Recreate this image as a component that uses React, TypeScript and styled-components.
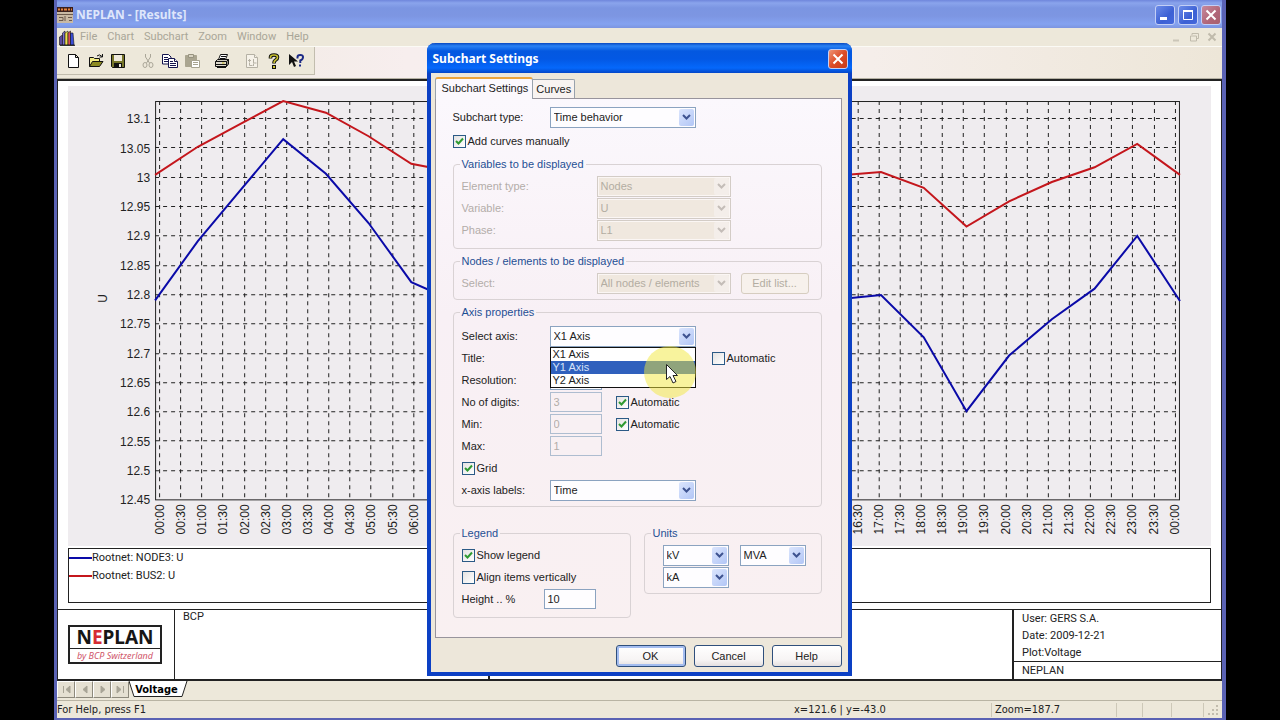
import React from "react";
import styled, { createGlobalStyle, css } from "styled-components";

const Global = createGlobalStyle`
  *, *::before, *::after { box-sizing: border-box; }
  body { margin: 0; background: #000; }
  button, input, select { font: inherit; color: inherit; margin: 0; }
`;

const tahoma = `"DejaVu Sans Condensed", "DejaVu Sans", sans-serif`;
const arial = `"Liberation Sans", Arial, sans-serif`;
const ui = `Roboto, "Liberation Sans", Arial, sans-serif`;
const caption = `"Noto Sans", "Open Sans", sans-serif`;

/* ---------- Application window ---------- */

const Desktop = styled.div`
  min-height: 100vh;
  padding: 0 54px;
  display: flex;
  background: #000;
  font: 11px/14px ${ui};
  color: #222;
`;

const Window = styled.div`
  position: relative;
  flex: 1;
  min-width: 0;
  display: flex;
  flex-direction: column;
  background: #ede8da;
  border: solid #5a62b4;
  border-width: 0 4px 3px 3px;
`;

const TitleBar = styled.header`
  height: 28px;
  display: flex;
  align-items: center;
  gap: 3px;
  padding: 2px 1px 0 0;
  background: linear-gradient(#6f86dc 0, #8aa4ec 3px, #7b95e2 8px, #7d96e2 16px, #84a2f0 24px, #7c94e0 28px);
`;

const WindowTitle = styled.h1`
  flex: 1;
  margin: 0;
  font: bold 12px/16px ${caption};
  color: #dfe6fb;
`;

const CaptionButton = styled.button<{ $tone?: "blue" | "rose" | "red" }>`
  width: 20px;
  height: 20px;
  padding: 0;
  display: grid;
  place-items: center;
  border: 1px solid #c3cff6;
  border-radius: 3px;
  background: ${(p) =>
    p.$tone === "red"
      ? "linear-gradient(135deg, #ee9475, #dd4c28 50%, #c83c18)"
      : p.$tone === "rose"
      ? "linear-gradient(135deg, #c8899c, #b06678 60%, #a8606f)"
      : "linear-gradient(135deg, #6c8ce8, #3c60d4 60%, #4468dc)"};
`;

const MenuBar = styled.nav`
  height: 19px;
  display: flex;
  align-items: center;
  gap: 4px;
  padding: 0 4px 0 2px;
  border-bottom: 1px solid #fbfaf5;
`;

const MenuItems = styled.div`
  display: flex;
  gap: 10px;
`;

const MenuItem = styled.button`
  padding: 0;
  border: 0;
  background: none;
  color: #a9a698;
`;

const MdiButtons = styled.div`
  margin-left: auto;
  display: flex;
  gap: 6px;
`;

const MdiButton = styled.button`
  width: 12px;
  height: 12px;
  padding: 0;
  border: 0;
  background: none;
`;

const ToolBand = styled.div`
  height: 32px;
  padding-bottom: 3px;
  background: linear-gradient(90deg, #ede8da 0, #f7eeee 30%, #f5eeea 70%, #ede6d8);
  border-bottom: 1px solid #b5b1a3;
  display: flex;
`;

const Toolbar = styled.div`
  display: flex;
  align-items: center;
  padding: 0 7px 0 6px;
  background: #ede8da;
  border: solid #c2bdae;
  border-width: 0 1px 1px 0;
`;

const ToolButton = styled.button`
  width: 22px;
  height: 22px;
  padding: 3px;
  border: 0;
  background: none;
  svg { display: block; }
`;

const ToolGap = styled.span`
  width: 8px;
`;

/* ---------- Results document ---------- */

const Document = styled.main`
  flex: 1;
  display: flex;
  flex-direction: column;
  background: #fff;
  border: solid #222;
  border-width: 2px 1px 2px 1px;
`;

const ChartPanel = styled.section`
  margin: 5px 10px 2px;
  background: #efecef;
  svg { display: block; width: 100%; height: auto; }
`;

const ChartLegend = styled.ul`
  list-style: none;
  height: 55px;
  margin: 0 10px 6px;
  padding: 0;
  border: 1px solid #222;
`;

const LegendEntry = styled.li<{ $color: string }>`
  height: 18px;
  display: flex;
  align-items: center;
  &::before {
    content: "";
    width: 23px;
    height: 2px;
    background: ${(p) => p.$color};
  }
`;

const TitleBlock = styled.footer`
  flex: 1;
  min-height: 70px;
  display: grid;
  grid-template-columns: 116px 3fr 5fr 209px;
  border-top: 1px solid #222;
`;

const BlockCell = styled.div<{ $rule?: number }>`
  padding: 0 8px;
  border-left: ${(p) => p.$rule ?? 0}px solid #222;
`;

const LogoCell = styled(BlockCell)`
  padding: 0 12px 0 10px;
  display: flex;
  align-items: center;
`;

const Logo = styled.div`
  flex: 1;
  border: 2px solid #222;
  text-align: center;
  color: #161616;
`;

const LogoName = styled.div`
  font: bold 19px/21px ${caption};
  border-bottom: 1px solid #222;
  em { font-style: normal; color: #d52c33; }
`;

const LogoBy = styled.div`
  font: italic 9px/13px ${caption};
  color: #d0566a;
`;

const InfoCell = styled(BlockCell)`
  padding: 0;
  display: flex;
  flex-direction: column;
  justify-content: space-between;
`;

const InfoLines = styled.div`
  padding: 0 8px;
  line-height: 17px;
`;

const InfoFoot = styled.div`
  padding: 0 8px;
  line-height: 17px;
  border-top: 1px solid #222;
`;

const SheetBar = styled.div`
  height: 19px;
  display: flex;
  align-items: flex-start;
`;

const SheetNav = styled.button`
  width: 18px;
  height: 17px;
  padding: 0;
  display: grid;
  place-items: center;
  border: 1px solid #8d897c;
  border-top-color: #fff;
  border-left-color: #fff;
  background: #e5e0d2;
`;

const SheetTab = styled.button`
  position: relative;
  width: 59px;
  height: 17px;
  padding: 0 4px 0 0;
  border: 0;
  background: none;
  font: bold 11px/15px ${tahoma};
  color: #000;
  svg { position: absolute; inset: 0; }
  span { position: relative; }
`;

const StatusBar = styled.div`
  height: 18px;
  display: flex;
  align-items: center;
  border-top: 1px solid #b9b4a4;
  font: 11px/14px ${tahoma};
`;

const StatusCell = styled.span<{ $width?: number; $rule?: boolean }>`
  ${(p) => (p.$width ? css`width: ${p.$width}px;` : css`flex: 1;`)}
  height: 14px;
  line-height: 14px;
  white-space: nowrap;
  ${(p) => p.$rule && css`
    padding-left: 3px;
    border-left: 1px solid #cdc8b8;
  `}
`;

/* ---------- Dialog ---------- */

const Dialog = styled.div`
  position: absolute;
  top: 43px;
  left: calc(50% - 213px);
  width: 425px;
  display: flex;
  flex-direction: column;
  background: #ede7da;
  border: solid #0c40c4;
  border-width: 0 4px 4px 4px;
  border-radius: 8px 8px 0 0;
  font: 11px/14px ${arial};
`;

const DialogTitleBar = styled.div`
  height: 30px;
  margin: 0 -4px;
  padding: 1px 4px 0 6px;
  display: flex;
  align-items: center;
  justify-content: space-between;
  border-radius: 8px 8px 0 0;
  background: linear-gradient(#0848c0 0, #2a82f4 3px, #0458e0 8px, #0358e4 16px, #0568fb 25px, #0346c8 30px);
`;

const DialogTitle = styled.h2`
  margin: 0;
  font: bold 12px/16px ${caption};
  color: #fff;
`;

const DialogBody = styled.form`
  padding: 4px 6px 5px 4px;
`;

const Tabs = styled.div`
  height: 21px;
  display: flex;
  align-items: flex-end;
`;

const Tab = styled.button<{ $active?: boolean }>`
  height: 19px;
  padding: 0 3px;
  border: 1px solid #98a2ac;
  border-bottom: 0;
  border-left-width: 0;
  border-radius: 0 2px 0 0;
  background: #f8f3f1;
  ${(p) => p.$active && css`
    position: relative;
    height: 22px;
    margin-bottom: -1px;
    padding: 0 4px 3px 6px;
    border-left-width: 1px;
    border-top: 2px solid #eca53c;
    border-radius: 3px 3px 0 0;
    background: #fbf8fd;
  `}
`;

const TabPanel = styled.div`
  padding: 7px 19px 19px 17px;
  display: flex;
  flex-direction: column;
  gap: 5px;
  border: 1px solid #98949c;
  background: linear-gradient(#fbf8fd, #f8f0f5 40%, #f9f0f1);
`;

const Rows = styled.div`
  display: flex;
  flex-direction: column;
  gap: 2px;
`;

const Group = styled.fieldset<{ $head?: number; $foot?: number }>`
  min-width: 0;
  margin: 0;
  padding: ${(p) => p.$head ?? 4}px 8px ${(p) => p.$foot ?? 5}px;
  border: 1px solid #d9d2d4;
  border-radius: 4px;
`;

const GroupTitle = styled.legend`
  margin-left: -2px;
  padding: 0 2px;
  color: #1f4f94;
`;

const BottomGroups = styled.div`
  display: grid;
  grid-template-columns: 1fr 1fr;
  align-items: start;
  gap: 13px;
  margin-top: 14px;
`;

const Row = styled.div<{ $disabled?: boolean; $indent?: number }>`
  height: 22px;
  display: flex;
  align-items: center;
  padding-left: ${(p) => p.$indent ?? 0}px;
  color: ${(p) => (p.$disabled ? "#b3ada9" : "#222")};
`;

const RowLabel = styled.label<{ $width: number }>`
  width: ${(p) => p.$width}px;
  flex: none;
`;

const SelectWrap = styled.span<{ $width: number; $after?: number }>`
  position: relative;
  display: block;
  flex: none;
  width: ${(p) => p.$width}px;
  height: 21px;
  margin-right: ${(p) => p.$after ?? 0}px;
`;

const SelectBox = styled.select`
  appearance: none;
  display: block;
  width: 100%;
  height: 100%;
  padding: 0 20px 0 3px;
  border: 1px solid #8ba3c0;
  border-radius: 0;
  background: #fefdff;
  opacity: 1;
  &:disabled {
    color: #b3ada2;
    border-color: #d3ccc6;
    background: #f0e8df;
    box-shadow: inset 0 0 0 1px #fbf6f4;
  }
`;

const SelectArrow = styled.span<{ $disabled?: boolean }>`
  position: absolute;
  top: 2px;
  right: 2px;
  width: 15px;
  height: 17px;
  display: grid;
  place-items: center;
  border-radius: 2px;
  pointer-events: none;
  color: ${(p) => (p.$disabled ? "#c4bdb8" : "#3e5390")};
  background: ${(p) => (p.$disabled ? "#f4eeea" : "linear-gradient(135deg, #dbe5fd, #b2c6f6)")};
`;

const TextBox = styled.input`
  width: 52px;
  height: 20px;
  padding: 0 3px;
  border: 1px solid #8ba3c0;
  background: #fefdff;
  &:disabled {
    color: #b3ada9;
    border-color: #aebdd0;
    background: #f8f0f3;
  }
`;

const CheckLabel = styled.label<{ $left?: number }>`
  display: inline-flex;
  align-items: center;
  gap: 2px;
  margin-left: ${(p) => p.$left ?? 0}px;
`;

const CheckMark = styled.span`
  position: relative;
  display: block;
  width: 13px;
  height: 13px;
  input {
    appearance: none;
    display: block;
    width: 13px;
    height: 13px;
    border: 1px solid #2b5a86;
    background: linear-gradient(135deg, #e4e2e2, #fff);
  }
  svg { position: absolute; inset: 0; pointer-events: none; }
`;

const PushButton = styled.button<{ $default?: boolean }>`
  width: 70px;
  height: 22px;
  padding: 0;
  border: 1px solid #2f4f7c;
  border-radius: 3px;
  background: linear-gradient(#fff, #f7f4f4 70%, #e4dfe0);
  ${(p) => p.$default && css`box-shadow: inset 0 0 0 2px #a4bdf0;`}
  &:disabled {
    width: 68px;
    height: 21px;
    color: #b3ada2;
    border-color: #d6cdc0;
    background: #f7f1ec;
  }
`;

const Footer = styled.div`
  display: flex;
  justify-content: flex-end;
  gap: 8px;
  padding-top: 7px;
`;

const DropList = styled.ul`
  position: absolute;
  z-index: 1;
  top: 100%;
  left: 0;
  right: 0;
  margin: 0;
  padding: 0;
  list-style: none;
  border: 1px solid #111;
  background: #fff;
`;

const DropItem = styled.li<{ $selected?: boolean }>`
  padding: 0 2px;
  line-height: 13px;
  ${(p) => p.$selected && css`
    color: #d6e2f8;
    background: #2f60bd;
  `}
`;

const Pointer = styled.svg`
  position: absolute;
  z-index: 2;
  top: 20px;
  left: 94px;
  pointer-events: none;
`;

/* ---------- Chart ---------- */

const node3 = [12.791, 12.892, 12.979, 13.066, 13.007, 12.923, 12.822, 12.79, 12.77, 12.76, 12.75, 12.75, 12.76, 12.77, 12.78, 12.79, 12.793, 12.8, 12.728, 12.602, 12.697, 12.759, 12.811, 12.901, 12.79];
const bus2 = [13.005, 13.053, 13.092, 13.131, 13.111, 13.071, 13.024, 13.01, 13.0, 12.99, 12.99, 12.99, 12.99, 13.0, 13.0, 13.0, 13.004, 13.01, 12.983, 12.917, 12.96, 12.993, 13.018, 13.058, 13.005];

const plot = { left: 87, right: 1111, top: 15, bottom: 414, min: 12.45, max: 13.131 };
const xAt = (hour: number) => plot.left + (hour / 24) * (plot.right - plot.left);
const yAt = (v: number) => plot.bottom - ((v - plot.min) / (plot.max - plot.min)) * (plot.bottom - plot.top);
const pointsOf = (data: number[]) => data.map((v, h) => `${xAt(h).toFixed(1)},${yAt(v).toFixed(1)}`).join(" ");
const yTicks = Array.from({ length: 14 }, (_, i) => Math.round((12.45 + i * 0.05) * 100) / 100);
const xTicks = Array.from({ length: 49 }, (_, i) => ({
  x: Math.round(91 + i * 21.14) + 0.5,
  label: `${String(Math.floor(i / 2) % 24).padStart(2, "0")}:${i % 2 ? "30" : "00"}`,
}));

const AxisText = styled.text`
  font: 12px ${arial};
  fill: #222;
`;

function VoltageChart() {
  return (
    <svg viewBox="0 0 1142 460" role="img" aria-label="Voltage over time">
      <g stroke="#222" strokeDasharray="4 4" fill="none">
        {xTicks.map((t) => <line key={t.x} x1={t.x} x2={t.x} y1={plot.top} y2={plot.bottom} />)}
        {yTicks.slice(1).map((v) => {
          const y = Math.round(yAt(v)) - 0.5;
          return <line key={v} x1={plot.left} x2={plot.right} y1={y} y2={y} />;
        })}
      </g>
      <rect x={87.5} y={15.5} width={1023} height={398} fill="none" stroke="#222" />
      <polyline points={pointsOf(bus2)} fill="none" stroke="#c4161c" strokeWidth="2" />
      <polyline points={pointsOf(node3)} fill="none" stroke="#0a0aa8" strokeWidth="2" />
      {yTicks.map((v) => (
        <AxisText key={v} x={82} y={yAt(v) + 4} textAnchor="end">{v}</AxisText>
      ))}
      {xTicks.map((t) => (
        <AxisText key={t.x} transform={`translate(${t.x + 4} 418) rotate(-90)`} textAnchor="end">{t.label}</AxisText>
      ))}
      <AxisText transform="translate(39 208) rotate(-90)" textAnchor="end">U</AxisText>
    </svg>
  );
}

/* ---------- Icons ---------- */

const CloseGlyph = () => (
  <svg width="12" height="12" viewBox="0 0 12 12"><path d="M1.500 1.500l9 9M10.500 1.500l-9 9" stroke="#fff" strokeWidth="2" /></svg>
);

const AppIcon = () => (
  <svg width="16" height="16" viewBox="0 0 16 16">
    <rect width="16" height="16" fill="#c9b9a4" />
    <rect width="16" height="5" fill="#3a1f1c" />
    <path d="M1 2.500h2m1 0h2m1 0h3m1 0h2m1 0h1" stroke="#e8843c" strokeWidth="2" />
    <path d="M0 7.500h16M2 10.500h4v3h-4M8 9v5M11 10.500h4M12 13.500h3" stroke="#6b594c" fill="none" />
  </svg>
);

const BooksIcon = () => (
  <svg width="17" height="17" viewBox="0 0 17 17">
    <path d="M.5 8l3-2v10h-3z" fill="#5a4a9c" stroke="#111" strokeWidth=".6" />
    <path d="M3.500 4l2.500-2v14h-2.500z" fill="#7b6fd0" stroke="#111" strokeWidth=".6" />
    <path d="M6 4l3-2v14h-3z" fill="#ece04c" stroke="#111" strokeWidth=".6" />
    <path d="M9 4l2.500-2v14h-2.500z" fill="#d6505a" stroke="#111" strokeWidth=".6" />
    <path d="M11.500 4h2.500l1 12h-3.500z" fill="#3a4ed8" stroke="#111" strokeWidth=".6" />
    <path d="M1 16.300h15" stroke="#111" />
  </svg>
);

const toolIcons: Record<string, React.ReactNode> = {
  New: <path d="M2.500 1.500h7l3 3v10h-10zM9.500 1.500v3h3" fill="#fff" stroke="#111" />,
  Open: (
    <>
      <path d="M1.500 13.500v-9h4l1 1h5v3" fill="#f2ec84" stroke="#111" />
      <path d="M1.500 13.500l3-5h10.500l-3.500 5z" fill="#8c8a20" stroke="#111" />
      <path d="M9 3q2.500-2.500 5 .5M14.500 1v3h-3" fill="none" stroke="#111" />
    </>
  ),
  Save: (
    <>
      <path d="M1.500 1.500h13v13h-12l-1-1z" fill="#77762a" stroke="#111" />
      <rect x="4" y="2" width="8" height="6" fill="#efeadd" />
      <rect x="4" y="10" width="8" height="4.500" fill="#111" />
      <rect x="9" y="11" width="2" height="3" fill="#efeadd" />
    </>
  ),
  Cut: (
    <g fill="none" stroke="#aaa698">
      <path d="M5.500 1v3l4 6M10.500 1v3l-4 6" />
      <ellipse cx="5" cy="12" rx="2" ry="2.500" />
      <ellipse cx="11" cy="12" rx="2" ry="2.500" />
    </g>
  ),
  Copy: (
    <g fill="#fff" stroke="#14144e">
      <path d="M.5 1.500h6l2.500 2.500v7h-8.500z" />
      <path d="M2 4.500h4M2 6.500h4M2 8.500h4" />
      <path d="M6.500 5.500h6l3 3v6h-9z" />
      <path d="M12.500 5.500v3h3M8 8.500h3M8 10.500h6M8 12.500h6" />
    </g>
  ),
  Paste: (
    <>
      <path d="M1.500 2.500h11v11h-11z" fill="#aaa590" stroke="#aaa590" />
      <path d="M4.500 1.500h5v3h-5z" fill="#d8d3c2" stroke="#97937f" />
      <path d="M7.500 7.500h8v7h-8z" fill="#fff" stroke="#a7a391" />
      <path d="M9 9.500h5M9 11.500h5" stroke="#a7a391" />
    </>
  ),
  Print: (
    <g stroke="#111">
      <path d="M4.500 6.500l2-5h7l-2 5z" fill="#fff" />
      <path d="M7 3.500h5M6 5.500h5" />
      <path d="M1.500 8.500l2-2h11l-2 2z" fill="#c9c6bb" />
      <path d="M1.500 8.500h11v5h-11z" fill="#ddd9cc" />
      <path d="M12.500 8.500l2-2v4.500l-2 2.500z" fill="#8f8c80" />
      <path d="M2 11.500h10M3 14.500h9" />
      <path d="M8 10h2.500" stroke="#c6b828" />
    </g>
  ),
  Preview: (
    <g fill="#f6f2e9" stroke="#b5b1a4">
      <path d="M2.500 1.500h8l3 3v10h-11z" />
      <path d="M10.500 1.500v3h3M5.500 6v3M4 7.500h3M9.500 6v4h3M5.500 9.500v3h3M9.500 10.500v2.500" />
    </g>
  ),
  Help: (
    <>
      <path d="M4.500 5.500V4.200q0-2.200 3.500-2.200t3.500 2.200q0 1.800-1.800 2.800t-1.700 3.500" fill="none" stroke="#111" strokeWidth="3.600" />
      <path d="M4.500 5V4.200q0-2.200 3.500-2.200t3.500 2.200q0 1.800-1.800 2.800t-1.700 3" fill="none" stroke="#c9c02c" strokeWidth="1.600" />
      <rect x="6" y="12" width="4" height="4" fill="#111" />
      <rect x="7" y="13" width="2" height="2" fill="#c9c02c" />
    </>
  ),
  "Context help": (
    <>
      <path d="M1 1v11l3-3 2 5 2-1-2-4.500h4z" fill="#111" />
      <path d="M9.500 5.500V4q0-2 2.800-2t2.700 2.200-2.700 3.300V10" fill="none" stroke="#1c2a86" strokeWidth="2" />
      <rect x="11" y="11.500" width="2" height="2" fill="#1c2a86" />
    </>
  ),
};

const toolGroups = [["New", "Open", "Save"], ["Cut", "Copy", "Paste"], ["Print"], ["Preview", "Help", "Context help"]];

const sheetArrows: [string, string][] = [
  ["First sheet", "M2.500 2v7M9 2v7l-4-3.500z"],
  ["Previous sheet", "M8 2v7l-4-3.500z"],
  ["Next sheet", "M4 2v7l4-3.500z"],
  ["Last sheet", "M2 2v7l4-3.500zM8.500 2v7"],
];

/* ---------- Form parts ---------- */

interface SelectProps {
  id: string;
  label?: string;
  value: string;
  width: number;
  after?: number;
  disabled?: boolean;
  options?: string[];
  children?: React.ReactNode;
}

function Select({ id, label, value, width, after, disabled, options = [value], children }: SelectProps) {
  return (
    <SelectWrap $width={width} $after={after}>
      <SelectBox id={id} aria-label={label} defaultValue={value} disabled={disabled}>
        {options.map((o) => <option key={o}>{o}</option>)}
      </SelectBox>
      <SelectArrow $disabled={disabled}>
        <svg width="9" height="7" viewBox="0 0 9 7"><path d="M1 1l3.500 3.500L8 1" fill="none" stroke="currentColor" strokeWidth="2" /></svg>
      </SelectArrow>
      {children}
    </SelectWrap>
  );
}

function Check({ label, checked, left }: { label: string; checked?: boolean; left?: number }) {
  return (
    <CheckLabel $left={left}>
      <CheckMark>
        <input type="checkbox" defaultChecked={checked} />
        {checked && (
          <svg width="13" height="13" viewBox="0 0 13 13"><path d="M3 6l2.500 2.500L10 3.500" fill="none" stroke="#2f9a32" strokeWidth="2" /></svg>
        )}
      </CheckMark>
      {label}
    </CheckLabel>
  );
}

function SubchartDialog() {
  return (
    <Dialog role="dialog" aria-labelledby="dialog-title">
      <DialogTitleBar>
        <DialogTitle id="dialog-title">Subchart Settings</DialogTitle>
        <CaptionButton $tone="red" aria-label="Close dialog"><CloseGlyph /></CaptionButton>
      </DialogTitleBar>
      <DialogBody onSubmit={(e) => e.preventDefault()}>
        <Tabs role="tablist">
          <Tab type="button" role="tab" aria-selected $active>Subchart Settings</Tab>
          <Tab type="button" role="tab">Curves</Tab>
        </Tabs>
        <TabPanel role="tabpanel">
          <Rows>
            <Row>
              <RowLabel $width={97} htmlFor="type">Subchart type:</RowLabel>
              <Select id="type" value="Time behavior" width={146} />
            </Row>
            <Row><Check label="Add curves manually" checked /></Row>
          </Rows>

          <Group $foot={7}>
            <GroupTitle>Variables to be displayed</GroupTitle>
            <Row $disabled>
              <RowLabel $width={135} htmlFor="element">Element type:</RowLabel>
              <Select id="element" value="Nodes" width={134} disabled />
            </Row>
            <Row $disabled>
              <RowLabel $width={135} htmlFor="variable">Variable:</RowLabel>
              <Select id="variable" value="U" width={134} disabled />
            </Row>
            <Row $disabled>
              <RowLabel $width={135} htmlFor="phase">Phase:</RowLabel>
              <Select id="phase" value="L1" width={134} disabled />
            </Row>
          </Group>

          <Group>
            <GroupTitle>Nodes / elements to be displayed</GroupTitle>
            <Row $disabled>
              <RowLabel $width={135} htmlFor="nodes">Select:</RowLabel>
              <Select id="nodes" value="All nodes / elements" width={134} after={10} disabled />
              <PushButton type="button" disabled>Edit list...</PushButton>
            </Row>
          </Group>

          <Group $head={6}>
            <GroupTitle>Axis properties</GroupTitle>
            <Row>
              <RowLabel $width={88} htmlFor="axis">Select axis:</RowLabel>
              <Select id="axis" value="X1 Axis" width={146} options={["X1 Axis", "Y1 Axis", "Y2 Axis"]}>
                <DropList role="listbox" aria-label="Select axis">
                  <DropItem role="option">X1 Axis</DropItem>
                  <DropItem role="option" aria-selected $selected>Y1 Axis</DropItem>
                  <DropItem role="option">Y2 Axis</DropItem>
                </DropList>
                <Pointer width="52" height="52" viewBox="0 0 52 52">
                  <circle cx="26" cy="26" r="26" fill="#f2e83c" opacity="0.5" />
                  <path d="M22.500 18.500v15l3.500-3 3 6.500 3-1.500-3-6h4.500z" fill="#fff" stroke="#222" />
                </Pointer>
              </Select>
            </Row>
            <Row>
              <RowLabel $width={88} htmlFor="title">Title:</RowLabel>
              <TextBox id="title" />
              <Check label="Automatic" left={110} />
            </Row>
            <Row>
              <RowLabel $width={88} htmlFor="resolution">Resolution:</RowLabel>
              <TextBox id="resolution" />
            </Row>
            <Row>
              <RowLabel $width={88} htmlFor="digits">No of digits:</RowLabel>
              <TextBox id="digits" defaultValue="3" disabled />
              <Check label="Automatic" checked left={14} />
            </Row>
            <Row>
              <RowLabel $width={88} htmlFor="min">Min:</RowLabel>
              <TextBox id="min" defaultValue="0" disabled />
              <Check label="Automatic" checked left={14} />
            </Row>
            <Row>
              <RowLabel $width={88} htmlFor="max">Max:</RowLabel>
              <TextBox id="max" defaultValue="1" disabled />
            </Row>
            <Row><Check label="Grid" checked /></Row>
            <Row>
              <RowLabel $width={88} htmlFor="xlabels">x-axis labels:</RowLabel>
              <Select id="xlabels" value="Time" width={146} />
            </Row>
          </Group>

          <BottomGroups>
            <Group $foot={7}>
              <GroupTitle>Legend</GroupTitle>
              <Row><Check label="Show legend" checked /></Row>
              <Row><Check label="Align items vertically" /></Row>
              <Row>
                <RowLabel $width={82} htmlFor="height">Height .. %</RowLabel>
                <TextBox id="height" defaultValue="10" />
              </Row>
            </Group>
            <Group>
              <GroupTitle>Units</GroupTitle>
              <Row $indent={10}>
                <Select id="voltage-unit" label="Voltage unit" value="kV" width={66} after={11} />
                <Select id="power-unit" label="Power unit" value="MVA" width={66} />
              </Row>
              <Row $indent={10}>
                <Select id="current-unit" label="Current unit" value="kA" width={66} />
              </Row>
            </Group>
          </BottomGroups>
        </TabPanel>
        <Footer>
          <PushButton type="submit" $default>OK</PushButton>
          <PushButton type="button">Cancel</PushButton>
          <PushButton type="button">Help</PushButton>
        </Footer>
      </DialogBody>
    </Dialog>
  );
}

export default function App() {
  return (
    <>
      <Global />
      <Desktop>
        <Window>
          <TitleBar>
            <AppIcon />
            <WindowTitle>NEPLAN - [Results]</WindowTitle>
            <CaptionButton aria-label="Minimize">
              <svg width="12" height="12" viewBox="0 0 12 12"><path d="M1 9.500h7" stroke="#fff" strokeWidth="3" /></svg>
            </CaptionButton>
            <CaptionButton aria-label="Maximize">
              <svg width="12" height="12" viewBox="0 0 12 12"><path d="M1.500 2v8.500h9V2" fill="none" stroke="#fff" /><path d="M1 2h10" stroke="#fff" strokeWidth="2" /></svg>
            </CaptionButton>
            <CaptionButton $tone="rose" aria-label="Close"><CloseGlyph /></CaptionButton>
          </TitleBar>

          <MenuBar>
            <BooksIcon />
            <MenuItems>
              {["File", "Chart", "Subchart", "Zoom", "Window", "Help"].map((m) => <MenuItem key={m}>{m}</MenuItem>)}
            </MenuItems>
            <MdiButtons>
              <MdiButton aria-label="Minimize document"><svg width="12" height="12" viewBox="0 0 12 12"><path d="M3 9.500h6" stroke="#cbc6b8" strokeWidth="2" /></svg></MdiButton>
              <MdiButton aria-label="Restore document"><svg width="12" height="12" viewBox="0 0 12 12"><path d="M4 4V2.500h6.500v5H9M2.500 5h6v5h-6z" fill="none" stroke="#c0bbac" strokeWidth="1" /></svg></MdiButton>
              <MdiButton aria-label="Close document"><svg width="12" height="12" viewBox="0 0 12 12"><path d="M2.500 2.500l7 7M9.500 2.500l-7 7" stroke="#c0bbac" strokeWidth="2" /></svg></MdiButton>
            </MdiButtons>
          </MenuBar>

          <ToolBand>
            <Toolbar role="toolbar" aria-label="Standard">
              {toolGroups.map((group, i) => (
                <React.Fragment key={i}>
                  {i > 0 && <ToolGap />}
                  {group.map((name) => (
                    <ToolButton key={name} aria-label={name}>
                      <svg width="16" height="16" viewBox="0 0 16 16">{toolIcons[name]}</svg>
                    </ToolButton>
                  ))}
                </React.Fragment>
              ))}
            </Toolbar>
          </ToolBand>

          <Document>
            <ChartPanel><VoltageChart /></ChartPanel>
            <ChartLegend>
              <LegendEntry $color="#0a0aa8">Rootnet: NODE3: U</LegendEntry>
              <LegendEntry $color="#c4161c">Rootnet: BUS2: U</LegendEntry>
            </ChartLegend>
            <TitleBlock>
              <LogoCell>
                <Logo>
                  <LogoName>N<em>E</em>PLAN</LogoName>
                  <LogoBy>by BCP Switzerland</LogoBy>
                </Logo>
              </LogoCell>
              <BlockCell $rule={1}>BCP</BlockCell>
              <BlockCell $rule={2} />
              <InfoCell $rule={2}>
                <InfoLines>
                  <div>User: GERS S.A.</div>
                  <div>Date: 2009-12-21</div>
                  <div>Plot:Voltage</div>
                </InfoLines>
                <InfoFoot>NEPLAN</InfoFoot>
              </InfoCell>
            </TitleBlock>
          </Document>

          <SheetBar>
            {sheetArrows.map(([name, d]) => (
              <SheetNav key={name} aria-label={name}>
                <svg width="11" height="11" viewBox="0 0 11 11"><path d={d} fill="#a8a496" stroke="#a8a496" /></svg>
              </SheetNav>
            ))}
            <SheetTab>
              <svg width="59" height="17" viewBox="0 0 59 17"><path d="M0 0l5 15.500h48L58 0" fill="#fff" stroke="#222" /></svg>
              <span>Voltage</span>
            </SheetTab>
          </SheetBar>

          <StatusBar>
            <StatusCell>For Help, press F1</StatusCell>
            <StatusCell $width={197}>x=121.6 | y=-43.0</StatusCell>
            <StatusCell $width={125} $rule>Zoom=187.7</StatusCell>
            <StatusCell $width={26} $rule />
            <StatusCell $width={29} $rule />
            <StatusCell $width={32} $rule />
            <StatusCell $width={19} $rule>
              <svg width="13" height="13" viewBox="0 0 13 13"><path d="M9 2h2v2H9zM5 6h2v2H5zM9 6h2v2H9zM1 10h2v2H1zM5 10h2v2H5zM9 10h2v2H9z" fill="#c2bcae" /></svg>
            </StatusCell>
          </StatusBar>

          <SubchartDialog />
        </Window>
      </Desktop>
    </>
  );
}
